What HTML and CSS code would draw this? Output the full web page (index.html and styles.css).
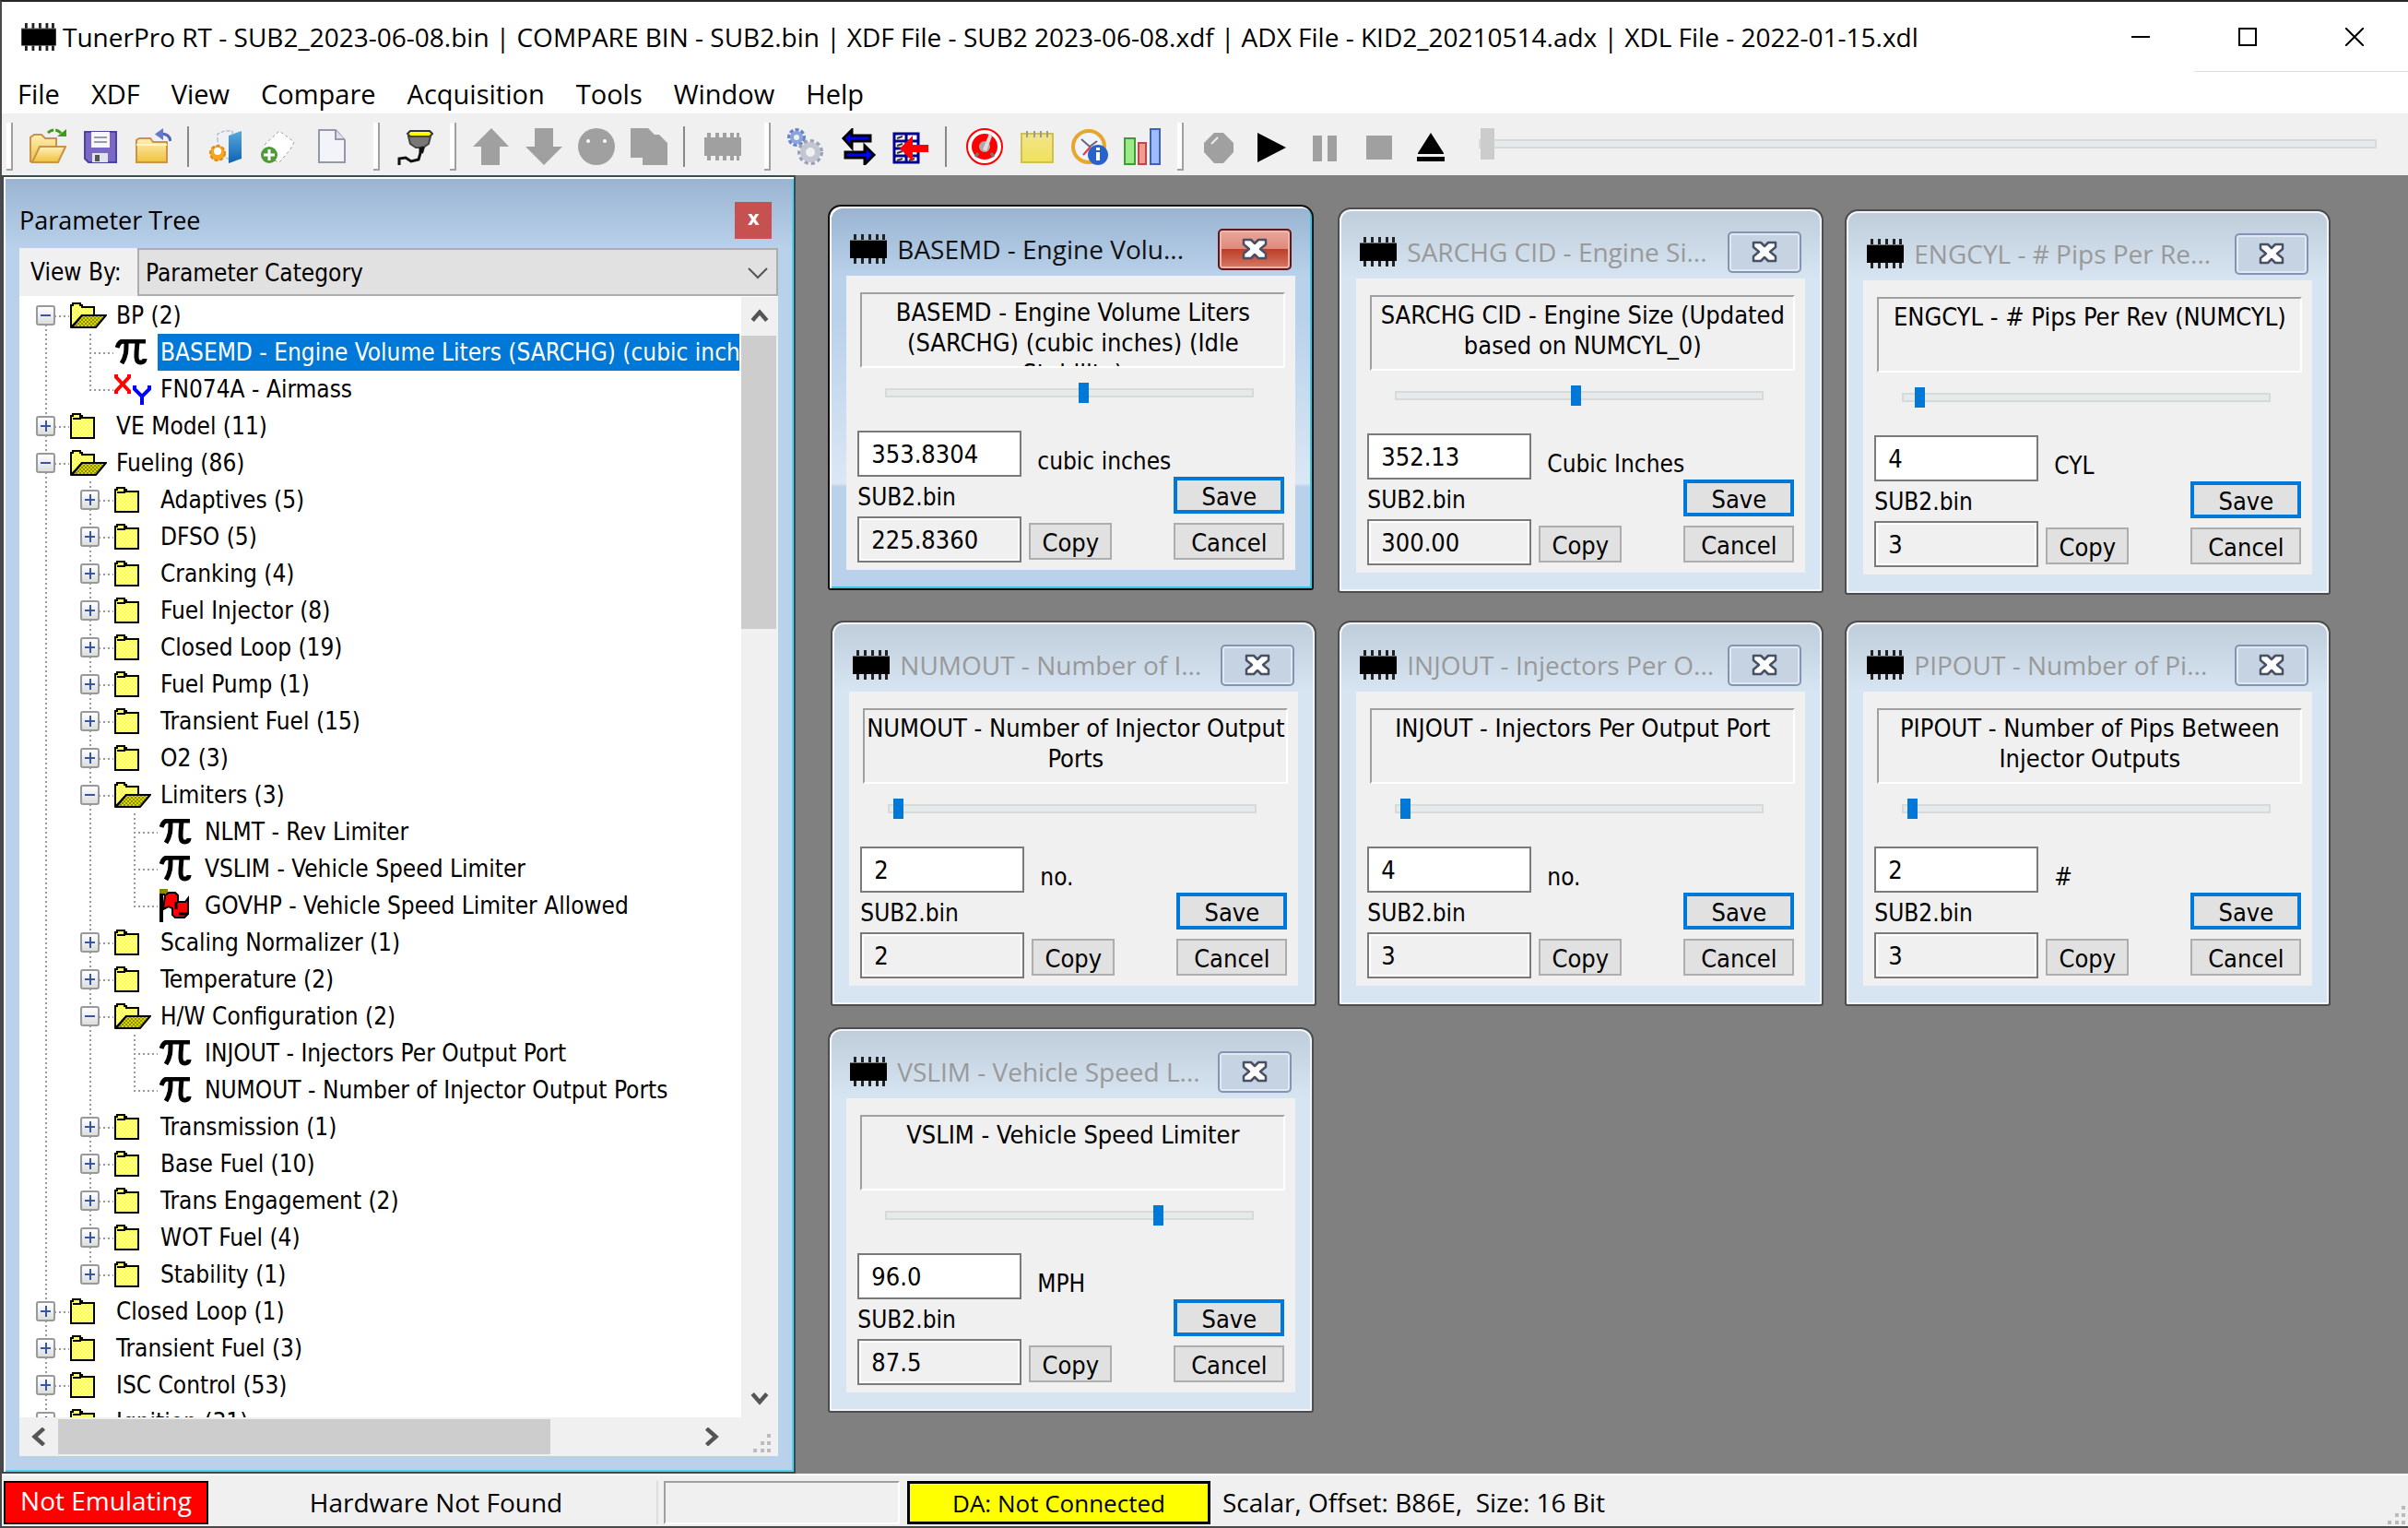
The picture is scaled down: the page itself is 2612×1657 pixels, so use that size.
FILE: index.html
```html
<!DOCTYPE html>
<html lang="en">
<head>
<meta charset="utf-8">
<meta name="viewport" content="width=device-width, initial-scale=1">
<title>TunerPro RT</title>
<link rel="stylesheet" href="styles.css">
</head>
<body>
<svg class="defs" aria-hidden="true">
  <defs>
    <linearGradient id="gFolder" x1="0" y1="0" x2="0" y2="1"><stop offset="0" stop-color="#fff0b8"/><stop offset="1" stop-color="#efc23c"/></linearGradient>
    <linearGradient id="gDoor" x1="0" y1="0" x2="0" y2="1"><stop offset="0" stop-color="#5aa9dc"/><stop offset="1" stop-color="#0f62b4"/></linearGradient>
    <linearGradient id="gNote" x1="0" y1="0" x2="0" y2="1"><stop offset="0" stop-color="#f2e489"/><stop offset="1" stop-color="#f0e25a"/></linearGradient>
    <pattern id="pDither" width="4" height="4" patternUnits="userSpaceOnUse"><rect width="4" height="4" fill="#ffff33"/><rect width="2" height="2" fill="#ffffa8"/><rect x="2" y="2" width="2" height="2" fill="#ffffa8"/></pattern>
    <pattern id="pDark" width="4" height="4" patternUnits="userSpaceOnUse"><rect width="4" height="4" fill="#8f8f00"/><rect width="2" height="2" fill="#d8d800"/><rect x="2" y="2" width="2" height="2" fill="#d8d800"/></pattern>
    <symbol id="chip" viewBox="0 0 40 32"><path d="M0 6h40v20H0z" fill="#000"/><path d="M0 6h40v1H0z" fill="#777"/><path d="M4 0h3v6H4zM12 0h3v6h-3zM20 0h3v6h-3zM28 0h3v6h-3zM35 0h3v6h-3zM4 26h3v6H4zM12 26h3v6h-3zM20 26h3v6h-3zM28 26h3v6h-3zM35 26h3v6h-3z" fill="#222"/></symbol>
    <symbol id="closex" viewBox="0 0 28 24"><path d="M2 2h8l4 4 4-4h8v5l-6 5 6 5v5h-8l-4-4-4 4H2v-5l6-5-6-5z" fill="#fff" stroke="#4a5064" stroke-width="2.500" stroke-linejoin="round"/></symbol>
    <symbol id="folder" viewBox="0 0 40 28"><path d="M1 3h2V1h8v2h2v2h13v22H1z" fill="url(#pDither)" stroke="#000" stroke-width="2"/><path d="M3 6h8v-2" fill="none" stroke="#000" stroke-width="2"/></symbol>
    <symbol id="folderopen" viewBox="0 0 40 28"><path d="M1 3h2V1h8v2h2v2h13v9H13L2 26H1z" fill="url(#pDither)" stroke="#000" stroke-width="2"/><path d="M13 14h26L28 27H2z" fill="url(#pDark)" stroke="#000" stroke-width="2"/></symbol>
    <symbol id="pi" viewBox="0 0 40 28"><path d="M3 9C5 3 7 2 11 2h23M13 3c0 10 0 15-5 23M25 3c-1 12-3 23 4 22 3 0 4-2 4-4" fill="none" stroke="#000" stroke-width="5"/></symbol>
    <symbol id="xy" viewBox="0 0 40 36"><path d="M2 2v3l14 15v3M16 2v3L2 20v3" fill="none" stroke="#f00" stroke-width="4"/><path d="M22 14v4l8 8 8-8v-4M30 25v10" fill="none" stroke="#00f" stroke-width="4"/></symbol>
    <symbol id="flag" viewBox="0 0 40 36"><path d="M3 4v32M3 5h4" stroke="#000" stroke-width="4"/><path d="M1 0h9v5H1z" fill="#888800"/><path d="M7 7l4-3h7l3 3v7h8l3-4v17l-4 4H18l-3-3v-7l-4-2-6 3z" fill="#f00" stroke="#000" stroke-width="2"/><path d="M19 14v8M22 27h10" stroke="#000" stroke-width="3"/></symbol>
  </defs>
</svg>

<header class="titlebar">
  <svg class="app-icon"><use href="#chip"/></svg>
  <h1 class="app-title">TunerPro RT - SUB2_2023-06-08.bin | COMPARE BIN - SUB2.bin | XDF File - SUB2 2023-06-08.xdf | ADX File - KID2_20210514.adx | XDL File - 2022-01-15.xdl</h1>
  <div class="window-controls">
    <button class="wc" aria-label="Minimize"><svg viewBox="0 0 20 20"><path d="M0 10h20" stroke="#000" stroke-width="2"/></svg></button>
    <button class="wc wc-line" aria-label="Maximize"><svg viewBox="0 0 20 20"><path d="M1 1h18v18H1z" fill="none" stroke="#000" stroke-width="2"/></svg></button>
    <button class="wc wc-line" aria-label="Close"><svg viewBox="0 0 20 20"><path d="M0 0l20 20M20 0L0 20" stroke="#000" stroke-width="2"/></svg></button>
  </div>
</header>

<nav class="menubar">
  <button>File</button><button>XDF</button><button>View</button><button>Compare</button><button>Acquisition</button><button>Tools</button><button>Window</button><button>Help</button>
</nav>

<div class="toolbar" role="toolbar" aria-label="Main toolbar">
  <span class="grip"></span>
  <button aria-label="Open bin"><svg viewBox="0 0 40 40"><path d="M1 36V10l4-3h8l4 4h12v9h10l-8 16z" fill="url(#gFolder)" stroke="#c9924e" stroke-width="2"/><path d="M3 37l8-17h28l-8 17z" fill="url(#gFolder)" stroke="#c9924e" stroke-width="2"/><path d="M20 5c5-5 12-4 16 3" fill="none" stroke="#3f9a1c" stroke-width="3" stroke-dasharray="7 2"/><path d="M30 9h10V1z" fill="#3f9a1c"/></svg></button>
  <button aria-label="Save bin"><svg viewBox="0 0 40 40"><path d="M3 4h34v33H7l-4-4z" fill="#7b68c6" stroke="#4b449c" stroke-width="2"/><path d="M10 4h20v17H10z" fill="#f6f6fb"/><path d="M13 10h14M13 15h14" stroke="#99a" stroke-width="2"/><path d="M11 27h17v10H11z" fill="#dfe3ea"/><path d="M14 29h5v7h-5z" fill="#555"/></svg></button>
  <button aria-label="Close bin"><svg viewBox="0 0 40 40"><path d="M2 37V13l3-2h12l3 4h15v22z" fill="url(#gFolder)" stroke="#c9924e" stroke-width="2"/><path d="M2 18h33" stroke="#fff3c8" stroke-width="2"/><path d="M39 14C38 8 34 6 29 6" fill="none" stroke="#5567b8" stroke-width="3"/><path d="M31 0v13l-9-6.500z" fill="#6677cc"/></svg></button>
  <span class="sep"></span>
  <button aria-label="Select XDF"><svg viewBox="0 0 40 40"><path d="M10 14V6l8-3h8v32l-10-4z" fill="#eef1f5" stroke="#9ab" stroke-width="1" stroke-dasharray="4 2"/><path d="M22 8l14-5v30l-14 5z" fill="url(#gDoor)"/><circle cx="10" cy="27" r="8" fill="#f5a623" stroke="#e08a10" stroke-width="2" stroke-dasharray="4 2"/><circle cx="10" cy="25" r="4" fill="#fff"/></svg></button>
  <button aria-label="New XDF item"><svg viewBox="0 0 40 40"><path d="M4 18L20 3l16 12-4 8-12 14-10-4z" fill="#fff" stroke="#999" stroke-width="1" stroke-dasharray="3 3"/><circle cx="9" cy="29" r="9" fill="#4f9a35"/><path d="M9 23v12M3 29h12" stroke="#fff" stroke-width="3"/></svg></button>
  <button aria-label="New document"><svg viewBox="0 0 40 40"><path d="M6 2h18l10 11v24H6z" fill="#f2f4fa" stroke="#9498a8" stroke-width="2"/><path d="M24 2v10h10" fill="#dde" stroke="#9498a8" stroke-width="2"/></svg></button>
  <span class="grip grip-wide"></span>
  <button aria-label="Connect"><svg viewBox="0 0 40 40"><path d="M15 3h21l3 3-3 3H15l-3-3z" fill="#ff0" stroke="#333" stroke-width="2"/><path d="M13 9h24l-2 8-6 4h-8l-6-4z" fill="#777" stroke="#444" stroke-width="2"/><path d="M26 21v6l-2 7-8 2-6-4-7 1v7" fill="none" stroke="#111" stroke-width="3"/><path d="M29 20l-2 7" stroke="#111" stroke-width="4"/></svg></button>
  <span class="grip"></span>
  <button disabled aria-label="Upload"><svg viewBox="0 0 40 40"><path d="M20 0l19 20H29v20H9V20H0z" fill="#a0a0a0"/></svg></button>
  <button disabled aria-label="Download"><svg viewBox="0 0 40 40"><path d="M20 40L0 20h10V0h20v20h10z" fill="#a0a0a0"/></svg></button>
  <button disabled aria-label="Verify"><svg viewBox="0 0 40 40"><circle cx="20" cy="20" r="20" fill="#a0a0a0"/><circle cx="11" cy="14" r="2" fill="#fff"/><circle cx="29" cy="14" r="2" fill="#fff"/></svg></button>
  <button disabled aria-label="Copy to emulator"><svg viewBox="0 0 40 40"><path d="M0 0h19l7 7h5l9 9v24H13v-8H0z" fill="#a0a0a0"/></svg></button>
  <span class="sep"></span>
  <button disabled aria-label="Chip"><svg viewBox="0 0 40 40"><path d="M0 10h3V5h4v5h5V5h4v5h4V5h4v5h4V5h4v5h3V5h3v5h2v20h-2v5h-3v-5h-3v5h-4v-5h-4v5h-4v-5h-4v5h-4v-5H7v5H3v-5H0z" fill="#a0a0a0"/></svg></button>
  <span class="grip grip-wide"></span>
  <button aria-label="Settings"><svg viewBox="0 0 40 40"><circle cx="10" cy="10" r="8" fill="none" stroke="#6a86c6" stroke-width="4" stroke-dasharray="4 2"/><circle cx="10" cy="10" r="5" fill="none" stroke="#8ba4dc" stroke-width="4"/><circle cx="25" cy="26" r="12" fill="none" stroke="#9aa0b4" stroke-width="4" stroke-dasharray="4 3"/><circle cx="25" cy="26" r="8" fill="none" stroke="#c2c6d2" stroke-width="6"/></svg></button>
  <button aria-label="Compare"><svg viewBox="0 0 40 40"><path d="M4 11L13 2v6h20v6H13v7z" fill="#00f" stroke="#000" stroke-width="3"/><path d="M37 29l-10 10v-7H6v-6h21v-7z" fill="#00f" stroke="#000" stroke-width="3"/></svg></button>
  <button aria-label="Import table"><svg viewBox="0 0 40 40"><path d="M2 6h26v31H2zM15 6v31M2 14h26M2 22h26M2 30h26" fill="#fff" stroke="#000090" stroke-width="3"/><path d="M5 11l6-2M5 19l6-2M5 27l6-2M5 35l6-2M18 35l6-2" stroke="#333" stroke-width="2"/><path d="M8 22L22 8v10h17v8H22v10z" fill="#f00"/></svg></button>
  <span class="sep"></span>
  <button aria-label="Target"><svg viewBox="0 0 40 40"><circle cx="20" cy="20" r="19" fill="#fff" stroke="#f00" stroke-width="2"/><circle cx="20" cy="20" r="10" fill="#aaa" stroke="#f00" stroke-width="8"/><path d="M18 23l7-17 3 3-6 16z" fill="#ddd"/><path d="M10 31l3-4M30 31l-3-4" stroke="#777" stroke-width="3"/></svg></button>
  <button aria-label="Notes"><svg viewBox="0 0 40 40"><path d="M3 6h34v31H3z" fill="url(#gNote)" stroke="#cfc052" stroke-width="2"/><path d="M9 3v7M17 3v7M24 3v7M31 3v7" stroke="#999" stroke-width="2"/></svg></button>
  <button aria-label="Dashboard"><svg viewBox="0 0 40 40"><circle cx="19" cy="20" r="17" fill="#f1f3fa" stroke="#e6a72c" stroke-width="4"/><path d="M11 12l9 8 8-6" fill="none" stroke="#667" stroke-width="2"/><path d="M13 29l8-9" stroke="#e33" stroke-width="2"/><circle cx="29" cy="29" r="11" fill="#2a62cc"/><path d="M29 21v3M29 26v9" stroke="#fff" stroke-width="4"/></svg></button>
  <button aria-label="Monitors"><svg viewBox="0 0 40 40"><path d="M1 11h11v28H1z" fill="#9bea86" stroke="#3f9a3a" stroke-width="2"/><path d="M16 16h8v23h-8z" fill="#f49a92" stroke="#b94a48" stroke-width="2"/><path d="M29 1h10v38H29z" fill="#9dbcff" stroke="#4262b8" stroke-width="2"/></svg></button>
  <span class="grip"></span>
  <button disabled aria-label="Record"><svg viewBox="0 0 40 40"><path d="M15 5h10l11 11v10L25 38H15L4 26V16z" fill="#a0a0a0"/><path d="M12 17l7-7" stroke="#eee" stroke-width="2"/></svg></button>
  <button aria-label="Play"><svg viewBox="0 0 40 40"><path d="M5 5l31 16L5 37z" fill="#000"/></svg></button>
  <button disabled aria-label="Pause"><svg viewBox="0 0 40 40"><path d="M8 8h10v28H8zM24 8h10v28H24z" fill="#a0a0a0"/></svg></button>
  <button disabled aria-label="Stop"><svg viewBox="0 0 40 40"><path d="M9 8h28v26H9z" fill="#a0a0a0"/></svg></button>
  <button aria-label="Eject"><svg viewBox="0 0 40 40"><path d="M22 5l14 22v1H8v-1zM7 31h30v5H7z" fill="#000"/></svg></button>
  <input class="playback" type="range" min="0" max="100" value="0" disabled aria-label="Playback position">
</div>

<main class="workspace">
  <section class="tree-panel">
    <div class="panel-head"><h2>Parameter Tree</h2><button class="panel-close" aria-label="Close panel">x</button></div>
    <div class="panel-body">
      <div class="viewby">
        <label for="viewby">View By:</label>
        <div class="combo">
          <select id="viewby"><option>Parameter Category</option></select>
          <svg class="combo-arrow" viewBox="0 0 22 14"><path d="M1 2l10 10L21 2" fill="none" stroke="#555" stroke-width="2"/></svg>
        </div>
      </div>
      <div class="tree-area">
        <ul class="tree">
          <li><div class="row"><button class="exp" aria-label="Collapse"></button><svg class="ic"><use href="#folderopen"/></svg><span>BP (2)</span></div>
            <ul>
              <li class="leaf"><div class="row"><svg class="ic"><use href="#pi"/></svg><span class="sel">BASEMD - Engine Volume Liters (SARCHG) (cubic inches) (Idle Stability)</span></div></li>
              <li class="leaf"><div class="row"><svg class="ic ic-tall"><use href="#xy"/></svg><span>FN074A - Airmass</span></div></li>
            </ul></li>
          <li><div class="row"><button class="exp plus" aria-label="Expand"></button><svg class="ic"><use href="#folder"/></svg><span>VE Model (11)</span></div></li>
          <li><div class="row"><button class="exp" aria-label="Collapse"></button><svg class="ic"><use href="#folderopen"/></svg><span>Fueling (86)</span></div>
            <ul>
              <li><div class="row"><button class="exp plus" aria-label="Expand"></button><svg class="ic"><use href="#folder"/></svg><span>Adaptives (5)</span></div></li>
              <li><div class="row"><button class="exp plus" aria-label="Expand"></button><svg class="ic"><use href="#folder"/></svg><span>DFSO (5)</span></div></li>
              <li><div class="row"><button class="exp plus" aria-label="Expand"></button><svg class="ic"><use href="#folder"/></svg><span>Cranking (4)</span></div></li>
              <li><div class="row"><button class="exp plus" aria-label="Expand"></button><svg class="ic"><use href="#folder"/></svg><span>Fuel Injector (8)</span></div></li>
              <li><div class="row"><button class="exp plus" aria-label="Expand"></button><svg class="ic"><use href="#folder"/></svg><span>Closed Loop (19)</span></div></li>
              <li><div class="row"><button class="exp plus" aria-label="Expand"></button><svg class="ic"><use href="#folder"/></svg><span>Fuel Pump (1)</span></div></li>
              <li><div class="row"><button class="exp plus" aria-label="Expand"></button><svg class="ic"><use href="#folder"/></svg><span>Transient Fuel (15)</span></div></li>
              <li><div class="row"><button class="exp plus" aria-label="Expand"></button><svg class="ic"><use href="#folder"/></svg><span>O2 (3)</span></div></li>
              <li><div class="row"><button class="exp" aria-label="Collapse"></button><svg class="ic"><use href="#folderopen"/></svg><span>Limiters (3)</span></div>
                <ul>
                  <li class="leaf"><div class="row"><svg class="ic"><use href="#pi"/></svg><span>NLMT - Rev Limiter</span></div></li>
                  <li class="leaf"><div class="row"><svg class="ic"><use href="#pi"/></svg><span>VSLIM - Vehicle Speed Limiter</span></div></li>
                  <li class="leaf"><div class="row"><svg class="ic ic-tall"><use href="#flag"/></svg><span>GOVHP - Vehicle Speed Limiter Allowed</span></div></li>
                </ul></li>
              <li><div class="row"><button class="exp plus" aria-label="Expand"></button><svg class="ic"><use href="#folder"/></svg><span>Scaling Normalizer (1)</span></div></li>
              <li><div class="row"><button class="exp plus" aria-label="Expand"></button><svg class="ic"><use href="#folder"/></svg><span>Temperature (2)</span></div></li>
              <li><div class="row"><button class="exp" aria-label="Collapse"></button><svg class="ic"><use href="#folderopen"/></svg><span>H/W Configuration (2)</span></div>
                <ul>
                  <li class="leaf"><div class="row"><svg class="ic"><use href="#pi"/></svg><span>INJOUT - Injectors Per Output Port</span></div></li>
                  <li class="leaf"><div class="row"><svg class="ic"><use href="#pi"/></svg><span>NUMOUT - Number of Injector Output Ports</span></div></li>
                </ul></li>
              <li><div class="row"><button class="exp plus" aria-label="Expand"></button><svg class="ic"><use href="#folder"/></svg><span>Transmission (1)</span></div></li>
              <li><div class="row"><button class="exp plus" aria-label="Expand"></button><svg class="ic"><use href="#folder"/></svg><span>Base Fuel (10)</span></div></li>
              <li><div class="row"><button class="exp plus" aria-label="Expand"></button><svg class="ic"><use href="#folder"/></svg><span>Trans Engagement (2)</span></div></li>
              <li><div class="row"><button class="exp plus" aria-label="Expand"></button><svg class="ic"><use href="#folder"/></svg><span>WOT Fuel (4)</span></div></li>
              <li><div class="row"><button class="exp plus" aria-label="Expand"></button><svg class="ic"><use href="#folder"/></svg><span>Stability (1)</span></div></li>
            </ul></li>
          <li><div class="row"><button class="exp plus" aria-label="Expand"></button><svg class="ic"><use href="#folder"/></svg><span>Closed Loop (1)</span></div></li>
          <li><div class="row"><button class="exp plus" aria-label="Expand"></button><svg class="ic"><use href="#folder"/></svg><span>Transient Fuel (3)</span></div></li>
          <li><div class="row"><button class="exp plus" aria-label="Expand"></button><svg class="ic"><use href="#folder"/></svg><span>ISC Control (53)</span></div></li>
          <li><div class="row"><button class="exp plus" aria-label="Expand"></button><svg class="ic"><use href="#folder"/></svg><span>Ignition (31)</span></div></li>
        </ul>
        <div class="vscroll">
          <button aria-label="Scroll up"><svg viewBox="0 0 18 18"><path d="M2 13l7-8 7 8" fill="none" stroke="#555" stroke-width="4"/></svg></button>
          <div class="vthumb"></div>
          <button class="to-end" aria-label="Scroll down"><svg viewBox="0 0 18 18"><path d="M2 5l7 8 7-8" fill="none" stroke="#555" stroke-width="4"/></svg></button>
        </div>
      </div>
      <div class="hscroll">
        <button aria-label="Scroll left"><svg viewBox="0 0 18 18"><path d="M14 1L5 9l9 8" fill="none" stroke="#555" stroke-width="4"/></svg></button>
        <div class="hthumb"></div>
        <button class="to-end" aria-label="Scroll right"><svg viewBox="0 0 18 18"><path d="M4 1l9 8-9 8" fill="none" stroke="#555" stroke-width="4"/></svg></button>
        <svg class="size-grip" viewBox="0 0 20 20"><path d="M15 0h4v4h-4zM8 8h4v4H8zM15 8h4v4h-4zM0 16h4v4H0zM8 16h4v4H8zM15 16h4v4h-4z" fill="#bbb"/></svg>
      </div>
    </div>
  </section>

  <section class="mdi">
    <form class="win w1 active">
      <div class="win-head"><svg class="chip"><use href="#chip"/></svg><h3>BASEMD - Engine Volu...</h3><button type="button" class="win-close" aria-label="Close"><svg><use href="#closex"/></svg></button></div>
      <div class="client">
        <p class="desc">BASEMD - Engine Volume Liters (SARCHG) (cubic inches) (Idle Stability)</p>
        <input class="slider" type="range" value="54" aria-label="BASEMD value">
        <div class="fields"><input class="val" id="v1" value="353.8304"><label class="unit" for="v1">cubic inches</label><label class="bin" for="b1">SUB2.bin</label><button type="button" class="save">Save</button><input class="val ro" id="b1" value="225.8360" readonly><button type="button" class="copy">Copy</button><button type="button" class="cancel">Cancel</button></div>
      </div>
    </form>
    <form class="win w2">
      <div class="win-head"><svg class="chip"><use href="#chip"/></svg><h3>SARCHG CID - Engine Si...</h3><button type="button" class="win-close" aria-label="Close"><svg><use href="#closex"/></svg></button></div>
      <div class="client">
        <p class="desc">SARCHG CID - Engine Size (Updated based on NUMCYL_0)</p>
        <input class="slider" type="range" value="49" aria-label="SARCHG CID value">
        <div class="fields"><input class="val" id="v2" value="352.13"><label class="unit" for="v2">Cubic Inches</label><label class="bin" for="b2">SUB2.bin</label><button type="button" class="save">Save</button><input class="val ro" id="b2" value="300.00" readonly><button type="button" class="copy">Copy</button><button type="button" class="cancel">Cancel</button></div>
      </div>
    </form>
    <form class="win w3">
      <div class="win-head"><svg class="chip"><use href="#chip"/></svg><h3>ENGCYL - # Pips Per Re...</h3><button type="button" class="win-close" aria-label="Close"><svg><use href="#closex"/></svg></button></div>
      <div class="client">
        <p class="desc">ENGCYL - # Pips Per Rev (NUMCYL)</p>
        <input class="slider" type="range" value="3" aria-label="ENGCYL value">
        <div class="fields"><input class="val" id="v3" value="4"><label class="unit" for="v3">CYL</label><label class="bin" for="b3">SUB2.bin</label><button type="button" class="save">Save</button><input class="val ro" id="b3" value="3" readonly><button type="button" class="copy">Copy</button><button type="button" class="cancel">Cancel</button></div>
      </div>
    </form>
    <form class="win w4">
      <div class="win-head"><svg class="chip"><use href="#chip"/></svg><h3>NUMOUT - Number of I...</h3><button type="button" class="win-close" aria-label="Close"><svg><use href="#closex"/></svg></button></div>
      <div class="client">
        <p class="desc">NUMOUT - Number of Injector Output Ports</p>
        <input class="slider" type="range" value="1" aria-label="NUMOUT value">
        <div class="fields"><input class="val" id="v4" value="2"><label class="unit" for="v4">no.</label><label class="bin" for="b4">SUB2.bin</label><button type="button" class="save">Save</button><input class="val ro" id="b4" value="2" readonly><button type="button" class="copy">Copy</button><button type="button" class="cancel">Cancel</button></div>
      </div>
    </form>
    <form class="win w5">
      <div class="win-head"><svg class="chip"><use href="#chip"/></svg><h3>INJOUT - Injectors Per O...</h3><button type="button" class="win-close" aria-label="Close"><svg><use href="#closex"/></svg></button></div>
      <div class="client">
        <p class="desc">INJOUT - Injectors Per Output Port</p>
        <input class="slider" type="range" value="1" aria-label="INJOUT value">
        <div class="fields"><input class="val" id="v5" value="4"><label class="unit" for="v5">no.</label><label class="bin" for="b5">SUB2.bin</label><button type="button" class="save">Save</button><input class="val ro" id="b5" value="3" readonly><button type="button" class="copy">Copy</button><button type="button" class="cancel">Cancel</button></div>
      </div>
    </form>
    <form class="win w6">
      <div class="win-head"><svg class="chip"><use href="#chip"/></svg><h3>PIPOUT - Number of Pi...</h3><button type="button" class="win-close" aria-label="Close"><svg><use href="#closex"/></svg></button></div>
      <div class="client">
        <p class="desc">PIPOUT - Number of Pips Between Injector Outputs</p>
        <input class="slider" type="range" value="1" aria-label="PIPOUT value">
        <div class="fields"><input class="val" id="v6" value="2"><label class="unit" for="v6">#</label><label class="bin" for="b6">SUB2.bin</label><button type="button" class="save">Save</button><input class="val ro" id="b6" value="3" readonly><button type="button" class="copy">Copy</button><button type="button" class="cancel">Cancel</button></div>
      </div>
    </form>
    <form class="win w7">
      <div class="win-head"><svg class="chip"><use href="#chip"/></svg><h3>VSLIM - Vehicle Speed L...</h3><button type="button" class="win-close" aria-label="Close"><svg><use href="#closex"/></svg></button></div>
      <div class="client">
        <p class="desc">VSLIM - Vehicle Speed Limiter</p>
        <input class="slider" type="range" value="75" aria-label="VSLIM value">
        <div class="fields"><input class="val" id="v7" value="96.0"><label class="unit" for="v7">MPH</label><label class="bin" for="b7">SUB2.bin</label><button type="button" class="save">Save</button><input class="val ro" id="b7" value="87.5" readonly><button type="button" class="copy">Copy</button><button type="button" class="cancel">Cancel</button></div>
      </div>
    </form>
  </section>
</main>

<footer class="statusbar">
  <div class="st-emu">Not Emulating</div>
  <div class="st-hw">Hardware Not Found</div>
  <div class="st-blank"></div>
  <div class="st-da">DA: Not Connected</div>
  <div class="st-info">Scalar, Offset: B86E,&nbsp; Size: 16 Bit</div>
  <svg class="size-grip" viewBox="0 0 20 20"><path d="M15 0h4v4h-4zM8 8h4v4H8zM15 8h4v4h-4zM0 16h4v4H0zM8 16h4v4H8zM15 16h4v4h-4z" fill="#bbb"/></svg>
</footer>
</body>
</html>
```
FILE: styles.css
```css
:root {
  --ui: "Open Sans", "Noto Sans", sans-serif;
  --form: "DejaVu Sans Condensed", "DejaVu Sans", sans-serif;
  --face: #f0f0f0;
  --frame: #b9d1ea;
  --accent: #0078d7;
}

* { box-sizing: border-box; }

body {
  margin: 0;
  height: 100vh;
  display: flex;
  flex-direction: column;
  overflow: hidden;
  border: solid #4a4a4a;
  border-width: 2px 0 2px 2px;
  border-top-color: #262626;
  background: var(--face);
  color: #000;
  font: 26px/40px var(--form);
}

h1, h2, h3, p, ul { margin: 0; padding: 0; font-weight: 400; }
button, input, select { font: inherit; color: inherit; margin: 0; padding: 0; border: 0; }
button { background: none; }
svg { display: block; }
.defs { position: absolute; width: 0; height: 0; }

/* Title bar */
.titlebar { flex: none; display: flex; align-items: center; height: 76px; padding-left: 20px; background: #fff; }
.app-icon { flex: none; width: 40px; height: 30px; }
.app-title { flex: 1; padding-left: 6px; font: 28px/76px var(--ui); white-space: nowrap; }
.window-controls { display: flex; align-self: stretch; }
.wc { width: 116px; display: flex; align-items: center; justify-content: center; border-bottom: 1px solid #fff; }
.wc-line { border-color: #ddd; }
.wc svg { width: 20px; height: 20px; }

.menubar { flex: none; display: flex; gap: 34px; height: 45px; padding: 2px 17px 0; background: #fff; }
.menubar button { font: 29px/44px var(--ui); }

/* Toolbar */
.toolbar { flex: none; display: flex; align-items: center; height: 67px; padding: 5px 34px 0 0; }
.toolbar button { flex: none; width: 57px; display: flex; justify-content: center; }
.toolbar svg { width: 40px; height: 40px; }
.grip { flex: none; width: 7px; height: 52px; margin: 0 9px 0 10px; border: solid #a0a0a0; border-width: 0 2px 2px 0; background: #fff; }
.grip:first-child { margin-left: 5px; }
.grip-wide { margin-left: 17px; }
.sep { flex: none; width: 2px; height: 44px; margin: 0 12px 0 9px; background: #888; }

input[type="range"] { appearance: none; background: transparent; }
input[type="range"]::-webkit-slider-runnable-track { height: 10px; border: 2px solid #d6dad9; background: #e7eaea; }
input[type="range"]::-webkit-slider-thumb { appearance: none; width: 11px; height: 22px; margin-top: -8px; background: var(--accent); }
input[type="range"].playback { flex: 1; margin: 0 0 6px 26px; height: 34px; }
input[type="range"].playback::-webkit-slider-thumb { width: 15px; height: 34px; margin-top: -14px; background: #ccc; }

/* Parameter tree */
.workspace { flex: 1; min-height: 0; display: flex; background: #808080; }
.tree-panel {
  flex: 0 0 33%;
  min-width: 0;
  display: flex;
  flex-direction: column;
  padding: 0 17px 17px;
  border: 2px solid #3c4a50;
  box-shadow: inset 2px 2px #fff, inset -2px -2px #4fd0ee;
  background: linear-gradient(#99b3d1, var(--frame) 78px);
}
.panel-head { flex: none; height: 77px; display: flex; align-items: center; padding: 17px 7px 0 0; }
.panel-head h2 { flex: 1; font: 27px/40px var(--ui); }
.panel-close { width: 40px; height: 40px; background: #c75050; color: #fff; font: 700 22px/34px var(--form); padding-bottom: 4px; }
.panel-body { flex: 1; min-height: 0; min-width: 0; display: flex; flex-direction: column; background: var(--face); }
.viewby { flex: none; height: 52px; display: flex; align-items: center; padding-left: 12px; }
.viewby label { width: 116px; }
.combo { flex: 1; position: relative; height: 52px; }
.combo select { appearance: none; width: 100%; height: 52px; padding: 2px 7px 0; border: 2px solid #adadad; border-radius: 0; background: #e1e1e1; }
.combo-arrow { position: absolute; right: 11px; top: 20px; width: 22px; height: 14px; pointer-events: none; }
.tree-area { flex: 1; min-height: 0; display: flex; padding-top: 1px; background: #fff; }
.tree { flex: 1; min-width: 0; overflow: hidden; }
.tree ul { padding-left: 48px; }
.tree li { position: relative; list-style: none; }
.tree li::before {
  content: "";
  position: absolute;
  left: 28px;
  top: 0;
  width: 2px;
  height: 100%;
  background: repeating-linear-gradient(#999 0 2px, transparent 2px 5px);
}
.tree > li:first-child::before { top: 20px; }
.tree ul > li:last-child::before { height: 20px; }
.row { position: relative; display: flex; align-items: center; height: 40px; padding-left: 55px; white-space: nowrap; }
.row::before {
  content: "";
  position: absolute;
  left: 28px;
  top: 20px;
  width: 26px;
  height: 2px;
  background: repeating-linear-gradient(90deg, #999 0 2px, transparent 2px 5px);
}
.exp {
  position: absolute;
  left: 18px;
  top: 9px;
  width: 21px;
  height: 22px;
  border: 2px solid #999;
  border-radius: 3px;
  background: linear-gradient(#3b56a0, #3b56a0) center / 11px 2px no-repeat, linear-gradient(#fff, #ddd);
}
.exp.plus { background: linear-gradient(#3b56a0, #3b56a0) center / 11px 2px no-repeat, linear-gradient(#3b56a0, #3b56a0) center / 2px 12px no-repeat, linear-gradient(#fff, #ddd); }
.ic { flex: none; width: 40px; height: 28px; margin-right: 7px; }
.ic-tall { height: 36px; }
.row span { padding: 0 3px; }
.row .sel { flex: 1; min-width: 0; margin-right: 2px; overflow: hidden; background: var(--accent); color: #fff; }

.vscroll { flex: none; width: 40px; display: flex; flex-direction: column; background: var(--face); }
.vscroll button { height: 42px; display: flex; align-items: center; justify-content: center; }
.vthumb { height: 318px; background: #cdcdcd; margin-right: 2px; }
.hscroll { flex: none; height: 42px; display: flex; align-items: center; padding-right: 7px; }
.hscroll button { width: 42px; display: flex; align-items: center; justify-content: center; }
.vscroll svg, .hscroll button svg { width: 20px; height: 20px; }
.hthumb { flex: 0 0 534px; height: 38px; background: #cdcdcd; }
.vscroll .to-end { margin-top: auto; }
.hscroll .to-end { margin-left: auto; }
.size-grip { flex: none; width: 20px; height: 20px; margin-left: 24px; }
.hscroll .size-grip { align-self: end; margin-bottom: 4px; }

/* Parameter windows on the MDI desktop */
.mdi { flex: 1; position: relative; overflow: hidden; }
.win {
  position: absolute;
  width: 527px;
  padding: 2px 18px 20px;
  border: 2px solid #4d4d4d;
  border-radius: 14px 14px 3px 3px;
  box-shadow: inset 0 0 0 2px #f2f6fa;
  background: linear-gradient(#bfcddb, #d7e4f2 75px);
}
.win.active {
  border-color: #111;
  box-shadow: inset 2px 2px #fff, inset -2px -2px #35c8e0;
  background: linear-gradient(#99b3d1, var(--frame) 75px, var(--frame) 120px, #dbe7f5 300px, var(--frame) 304px);
}
.w1 { left: 35px; top: 32px; }
.w2 { left: 588px; top: 35px; }
.w3 { left: 1138px; top: 37px; }
.w4 { left: 38px; top: 483px; }
.w5 { left: 588px; top: 483px; }
.w6 { left: 1138px; top: 483px; }
.w7 { left: 35px; top: 924px; }
.win-head { display: flex; align-items: center; height: 73px; padding: 15px 4px 0; }
.chip { flex: none; width: 40px; height: 32px; }
.win-head h3 { flex: 1; min-width: 0; padding-left: 11px; font: 28px/40px var(--ui); white-space: nowrap; color: #999; }
.active .win-head h3 { color: #111; }
.win-close {
  flex: none;
  width: 80px;
  height: 45px;
  display: flex;
  align-items: center;
  justify-content: center;
  border: 2px solid #8593b3;
  border-radius: 5px;
  box-shadow: inset 0 0 0 2px #dfe8f3;
  background: #c5d3e3;
}
.win-close svg { width: 28px; height: 24px; }
.active .win-close {
  border-color: #5c1a20;
  box-shadow: inset 0 0 0 2px #eeb5aa;
  background: linear-gradient(#eaa79b, #dd8a7c 48%, #bb3f28 50%, #d77a68);
}
.client { padding: 18px 12px 8px; background: var(--face); }
.desc {
  height: 82px;
  margin: 0 -1px 0 3px;
  padding-top: 3px;
  overflow: hidden;
  border: 2px solid;
  border-color: #a0a0a0 #fff #fff #a0a0a0;
  font-size: 27px;
  line-height: 33px;
  text-align: center;
}
.slider { display: block; width: 400px; height: 22px; margin: 16px 0 30px 30px; }
.fields { display: grid; grid-template-columns: 178px 90px 1fr 120px; grid-template-rows: 50px 43px 50px; column-gap: 8px; }
.val { width: 178px; height: 50px; padding: 0 13px; border: 2px solid #7a7a7a; background: #fff; font-size: 27px; }
.ro { background: var(--face); box-shadow: inset 0 0 0 2px #fff; }
.unit { grid-column: 2 / -1; align-self: end; padding-left: 9px; line-height: 34px; }
.bin { grid-column: 1 / 4; line-height: 44px; }
.save, .copy, .cancel { height: 40px; padding-top: 4px; background: #e1e1e1; border: 2px solid #adadad; font-size: 27px; line-height: 32px; }
.save { border: 4px solid var(--accent); line-height: 28px; }
.copy, .cancel { align-self: end; margin-bottom: 3px; }
.cancel { grid-column: 4; }

/* Status bar */
.statusbar { flex: none; display: flex; align-items: stretch; height: 57px; padding: 6px 2px 2px; border-top: 2px solid #fff; font: 28px/47px var(--ui); }
.st-emu { flex: none; width: 222px; border: 2px solid #000; background: #f00; color: #fff; text-align: center; line-height: 38px; }
.st-hw { flex: none; width: 488px; padding-left: 8px; text-align: center; border-right: 2px solid #ddd; }
.st-blank { flex: none; width: 256px; margin-left: 6px; border: 2px solid; border-color: #a0a0a0 #fff #fff #a0a0a0; }
.st-da { flex: none; width: 329px; margin-left: 8px; border: 3px solid #000; background: #ff0; text-align: center; font-size: 26px; line-height: 42px; }
.st-info { flex: 1; padding-left: 13px; }
.statusbar .size-grip { align-self: end; }
```
